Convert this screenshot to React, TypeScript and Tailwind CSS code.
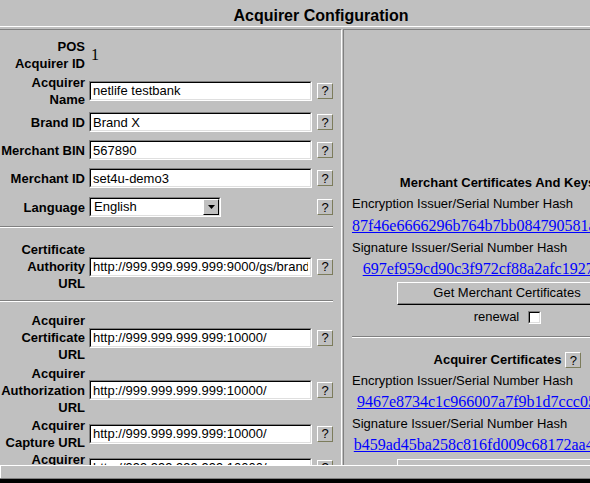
import type React from "react"

const sans = "font-['Liberation_Sans',Arial,Helvetica,sans-serif]"
const serif = "font-['Liberation_Serif','Times_New_Roman',serif]"

const Help: React.FC = () => (
  <span className="inline-flex w-[16px] h-[16px] shrink-0 items-center justify-center border border-t-white border-l-white border-b-[#7c7c5c] border-r-[#7c7c5c] text-[13px] leading-none">
    ?
  </span>
)

const TextBox: React.FC<{ value: string }> = ({ value }) => (
  <div className="w-[223px] h-[20px] border border-t-[#808080] border-l-[#808080] border-b-white border-r-white">
    <div className="h-full border border-t-black border-l-black border-b-[#dfdfdf] border-r-[#dfdfdf] bg-white overflow-hidden">
      <input
        readOnly
        value={value}
        className={`block w-full h-full px-[2px] text-[13px] leading-[16px] text-black bg-white outline-none ${sans}`}
      />
    </div>
  </div>
)

const Row: React.FC<{ label: string[]; height: string; children: React.ReactNode; help?: boolean }> = ({
  label,
  height,
  children,
  help = true,
}) => (
  <div className={`flex items-center ${height}`}>
    <div className="w-[85px] shrink-0 text-right font-bold text-[13px] leading-[17px]">
      {label.map((l, i) => (
        <div key={i}>{l}</div>
      ))}
    </div>
    <div className="w-[228px] shrink-0 ml-[4px]">{children}</div>
    {help && <Help />}
  </div>
)

const Rule: React.FC<{ className?: string }> = ({ className = "" }) => (
  <div className={`h-[2px] border-t border-[#808080] border-b border-b-white ${className}`} />
)

const HashLink: React.FC<{ hash: string }> = ({ hash }) => (
  <div className="h-[22px] flex items-center justify-center whitespace-nowrap">
    <a href="#" className={`text-[16px] text-[#0000ff] underline ${serif}`}>
      {hash}
    </a>
  </div>
)

const Label: React.FC<{ text: string; height?: string }> = ({ text, height = "h-[22px]" }) => (
  <div className={`${height} flex items-center pl-2 text-[13px] whitespace-nowrap`}>{text}</div>
)

const RaisedButton: React.FC<{ text: string; className?: string }> = ({ text, className = "" }) => (
  <div className={`w-[222px] h-[23px] border border-t-white border-l-white border-b-black border-r-black ${className}`}>
    <div className="h-full flex items-center justify-center border-b border-r border-[#808080] text-[13px] whitespace-nowrap">
      {text}
    </div>
  </div>
)

export default function App() {
  return (
    <div className={`relative w-[590px] h-[483px] overflow-hidden bg-[#c0c0c0] text-black ${sans}`}>
      <div className="w-[642px] h-[26px] pt-[6px] flex items-center justify-center text-[16px] font-bold">
        Acquirer Configuration
      </div>
      <div className="w-[680px] h-[3px] border-t border-white" />

      <div className="flex w-[680px]">
        {/* left cell: the form */}
        <div className="w-[342px] shrink-0 h-[460px] border-t border-[#808080] border-r border-r-white pt-[6px] pr-[8px]">
          <div className="flex items-center h-[37px]">
            <div className="w-[85px] shrink-0 text-right font-bold text-[13px] leading-[17px]">
              <div>POS</div>
              <div>Acquirer ID</div>
            </div>
            <div className={`ml-[6px] text-[16px] ${serif}`}>1</div>
          </div>
          <Row label={["Acquirer", "Name"]} height="h-[35px]">
            <TextBox value="netlife testbank" />
          </Row>
          <Row label={["Brand ID"]} height="h-[28px]">
            <TextBox value="Brand X" />
          </Row>
          <Row label={["Merchant BIN"]} height="h-[28px]">
            <TextBox value="567890" />
          </Row>
          <Row label={["Merchant ID"]} height="h-[28px]">
            <TextBox value="set4u-demo3" />
          </Row>
          <Row label={["Language"]} height="h-[30px]">
            <div className="w-[132px] h-[20px] border border-t-[#808080] border-l-[#808080] border-b-white border-r-white">
              <div className="h-full flex items-center border border-t-black border-l-black border-b-[#dfdfdf] border-r-[#dfdfdf] bg-white">
                <span className="flex-1 pl-[3px] text-[13px]">English</span>
                <span className="w-[16px] h-full flex items-center justify-center bg-[#c0c0c0] border border-t-white border-l-white border-b-black border-r-black">
                  <svg width="7" height="4" viewBox="0 0 7 4">
                    <path d="M0 0h7L3.5 4z" fill="#000" />
                  </svg>
                </span>
              </div>
            </div>
          </Row>

          <Rule className="mt-[4px]" />

          <div className="mt-[12px]">
            <Row label={["Certificate", "Authority", "URL"]} height="h-[53px]">
              <TextBox value="http://999.999.999.999:9000/gs/brandx/" />
            </Row>
          </div>

          <Rule className="mt-[7px]" />

          <div className="mt-[9px]">
            <Row label={["Acquirer", "Certificate", "URL"]} height="h-[53px]">
              <TextBox value="http://999.999.999.999:10000/" />
            </Row>
            <Row label={["Acquirer", "Authorization", "URL"]} height="h-[52px]">
              <TextBox value="http://999.999.999.999:10000/" />
            </Row>
            <Row label={["Acquirer", "Capture URL"]} height="h-[35px]">
              <TextBox value="http://999.999.999.999:10000/" />
            </Row>
            <Row label={["Acquirer", "Batch URL"]} height="h-[33px]">
              <TextBox value="http://999.999.999.999:10000/" />
            </Row>
          </div>
        </div>

        <div className="w-px shrink-0" />

        {/* right cell: certificates */}
        <div className="w-[328px] shrink-0 h-[460px] border-t border-l border-[#808080] pt-[143px]">
          <div className="h-[20px] flex items-center justify-center gap-[4px] whitespace-nowrap">
            <span className="font-bold text-[13px]">Merchant Certificates And Keys</span>
            <Help />
          </div>
          <Label text="Encryption Issuer/Serial Number Hash" />
          <HashLink hash="87f46e6666296b764b7bb084790581a2c4d7e03f" />
          <Label text="Signature Issuer/Serial Number Hash" height="h-[21px]" />
          <HashLink hash="697ef959cd90c3f972cf88a2afc19270fcf1fefa" />
          <div className="flex justify-center mt-[2px]">
            <RaisedButton text="Get Merchant Certificates" />
          </div>
          <div className="h-[24px] flex items-center justify-center gap-[9px] text-[13px]">
            <span>renewal</span>
            <span className="w-[13px] h-[13px] border border-t-[#808080] border-l-[#808080] border-b-white border-r-white">
              <span className="block w-full h-full bg-white border border-t-black border-l-black border-b-[#dfdfdf] border-r-[#dfdfdf]" />
            </span>
          </div>

          <Rule className="mt-[7px] mx-2" />

          <div className="mt-[12px] h-[20px] flex items-center justify-center gap-[4px] whitespace-nowrap">
            <span className="font-bold text-[13px]">Acquirer Certificates</span>
            <Help />
          </div>
          <Label text="Encryption Issuer/Serial Number Hash" height="h-[21px]" />
          <HashLink hash="9467e8734c1c966007a7f9b1d7ccc05fca81f7f2" />
          <Label text="Signature Issuer/Serial Number Hash" height="h-[21px]" />
          <HashLink hash="b459ad45ba258c816fd009c68172aa4e6c0f93b1" />
          <div className="flex justify-center mt-[3px]">
            <RaisedButton text="Get Acquirer Certificates" />
          </div>
        </div>
      </div>

      {/* frame edge at the bottom of the window */}
      <div className="absolute left-0 top-[465px] w-full h-[18px] bg-black">
        <div className="h-[13px] border-t border-l border-white bg-[#c0c0c0]" />
        <div className="h-px bg-[#808080]" />
      </div>
    </div>
  )
}
